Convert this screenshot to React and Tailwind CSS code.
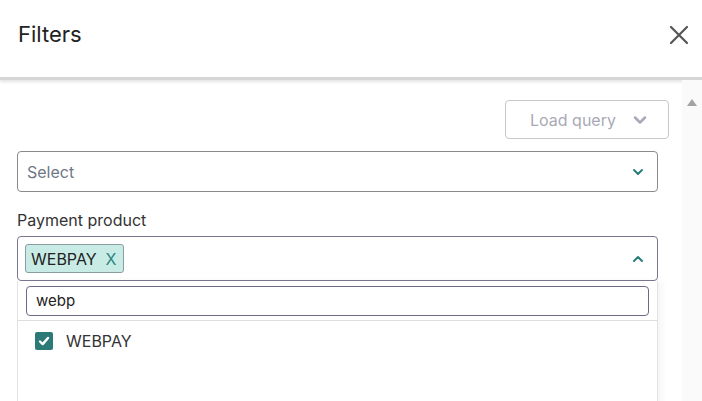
import React from 'react';

function Chevron({ up = false, className = '' }) {
  return (
    <svg className={className} viewBox="0 0 24 24" fill="none" stroke="currentColor" strokeWidth="3" strokeLinecap="round" strokeLinejoin="round">
      <path d={up ? 'M6 15l6-6 6 6' : 'M6 9l6 6 6-6'} />
    </svg>
  );
}

export default function App() {
  return (
    <div className="w-[702px] h-[401px] overflow-hidden bg-white flex flex-col" style={{ fontFamily: 'Inter, "Noto Sans", sans-serif' }}>
      <header className="h-[77px] shrink-0 flex items-center justify-between pl-[18px] pr-[13px] pb-[8px]">
        <h1 className="text-[22px] text-[#222] font-normal">Filters</h1>
        <svg className="w-[20px] h-[20px] text-[#555]" viewBox="0 0 20 20" fill="none" stroke="currentColor" strokeWidth="2.2" strokeLinecap="round">
          <path d="M2 2l16 16M18 2L2 18" />
        </svg>
      </header>
      <div className="h-[3px] shrink-0 bg-[#d6d6d6] shadow-[0_2px_3px_rgba(0,0,0,0.12)]" />
      <div className="flex flex-1 min-h-0">
        <main className="flex-1 pl-[17px] pr-[24px] pt-[20px]">
          <div className="flex justify-end mr-[-11px]">
            <button className="w-[164px] h-[39px] border border-[#c8c8cc] rounded-[4px] flex items-center justify-center gap-[14px] pl-[6px] text-[16px] text-[#a9a9b6]">
              Load query
              <Chevron className="w-[20px] h-[20px]" />
            </button>
          </div>
          <div className="mt-[12px] h-[41px] border border-[#8a8a8e] rounded-[4px] flex items-center justify-between pl-[9px] pr-[11px]">
            <span className="text-[16px] text-[#6f7787]">Select</span>
            <Chevron className="w-[16px] h-[16px] text-[#2b7d7a]" />
          </div>
          <div className="mt-[18px] text-[16px] text-[#333] leading-[20px]">Payment product</div>
          <div className="mt-[6px] h-[45px] border border-[#7b7790] rounded-[4px] flex items-center justify-between pl-[7px] pr-[11px]">
            <span className="h-[29px] flex items-center gap-[9px] pl-[5px] pr-[6px] bg-[#c8ece5] border border-[#8a9ea0] rounded-[3px] text-[16px] text-[#222]">
              WEBPAY
              <span className="text-[#2b8580] text-[16px]">X</span>
            </span>
            <Chevron up className="w-[16px] h-[16px] text-[#2b7d7a]" />
          </div>
          <div className="h-[200px] border-x border-[#e2e2e4] shadow-[4px_0_6px_rgba(0,0,0,0.04)]">
            <div className="pt-[5px] px-[8px] pb-[4px] border-b border-[#dedede]">
              <div className="h-[30px] border border-[#6e6a86] rounded-[4px] flex items-center pl-[9px] text-[15px] text-[#222]">webp</div>
            </div>
            <div className="flex items-center gap-[13px] pl-[17px] pt-[8px]">
              <span className="w-[18px] h-[18px] rounded-[2px] bg-[#2b7a78] flex items-center justify-center">
                <svg className="w-[12px] h-[12px] text-white" viewBox="0 0 12 12" fill="none" stroke="currentColor" strokeWidth="2.4" strokeLinecap="round" strokeLinejoin="round">
                  <path d="M2 6.5l2.7 2.6L10 3" />
                </svg>
              </span>
              <span className="text-[16px] text-[#333]">WEBPAY</span>
            </div>
          </div>
        </main>
        <aside className="w-[20px] bg-[#fafafa] flex justify-center pt-[19px]">
          <svg className="w-[10px] h-[7px] text-[#a3a3a3]" viewBox="0 0 10 7" fill="currentColor">
            <path d="M5 0l5 7H0z" />
          </svg>
        </aside>
      </div>
    </div>
  );
}
